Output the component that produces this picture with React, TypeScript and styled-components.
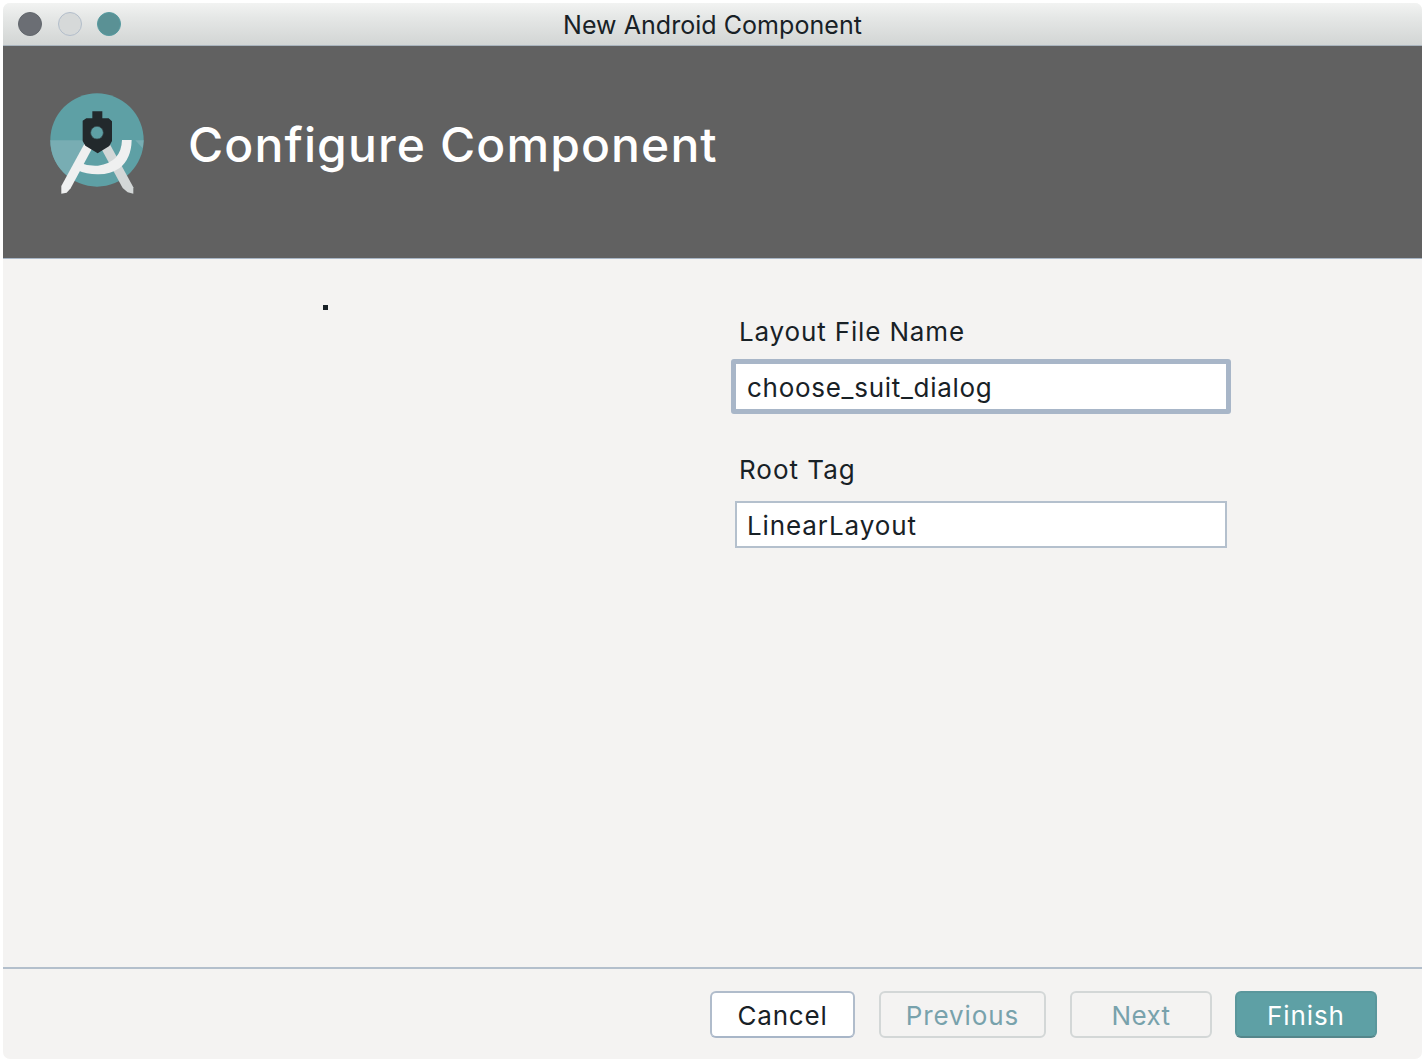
import React from "react";
import styled, { createGlobalStyle } from "styled-components";

const GlobalStyle = createGlobalStyle`
  * { box-sizing: border-box; }
  body { margin: 0; background: #ffffff; }
`;

const Page = styled.div`
  width: 1425px;
  height: 1062px;
  padding: 3px 3px 2px;
  font-family: Inter, "Liberation Sans", sans-serif;
  color: #182126;
`;

const Window = styled.main`
  width: 1419px;
  height: 1056px;
  display: flex;
  flex-direction: column;
  background: #f4f3f2;
  border-radius: 7px;
  overflow: hidden;
`;

const TitleBar = styled.header`
  height: 43px;
  flex: none;
  display: grid;
  grid-template-columns: 1fr auto 1fr;
  align-items: center;
  border-bottom: 1px solid #a9b4be;
  background: linear-gradient(#f2f3f2, #e5e7e6 35%, #d2d5d4);
`;

const Lights = styled.div`
  display: flex;
  gap: 15.5px;
  padding-left: 15px;
`;

const Light = styled.span<{ $fill: string; $edge: string }>`
  width: 24px;
  height: 24px;
  border-radius: 50%;
  background: ${(p) => p.$fill};
  border: 1px solid ${(p) => p.$edge};
`;

const WindowTitle = styled.div`
  font-size: 25px;
  line-height: 30px;
  padding-top: 1px;
  letter-spacing: 0.05px;
`;

const Banner = styled.section`
  height: 213px;
  flex: none;
  display: flex;
  align-items: flex-start;
  padding: 34px 0 0 37px;
  background: #616161;
  border-bottom: 1px solid #a8b6c6;
`;

const Heading = styled.h1`
  margin: 35px 0 0 28px;
  font-size: 48px;
  line-height: 60px;
  font-weight: 500;
  letter-spacing: 1.12px;
  color: #ffffff;
`;

const Content = styled.section`
  flex: 1;
  display: grid;
  grid-template-columns: 728px 500px;
`;

const Preview = styled.div`
  padding: 46px 0 0 320px;
`;

const Dot = styled.div`
  width: 5px;
  height: 5px;
  background: #182126;
`;

const Form = styled.div`
  display: flex;
  flex-direction: column;
  padding-top: 56px;
`;

const Label = styled.label<{ $spacing: number }>`
  height: 34px;
  padding-left: 8px;
  font-size: 26px;
  line-height: 34px;
  letter-spacing: ${(p) => p.$spacing}px;
`;

const Field = styled.input<{ $focused?: boolean; $spacing: number }>`
  width: ${(p) => (p.$focused ? 500 : 492)}px;
  height: ${(p) => (p.$focused ? 55 : 47)}px;
  margin: ${(p) => (p.$focused ? "10px 0 39px" : "14px 0 0 4px")};
  padding: 1px 0 0 ${(p) => (p.$focused ? 11 : 10)}px;
  border: ${(p) => (p.$focused ? "5px" : "2px")} solid ${(p) => (p.$focused ? "#a8b6c8" : "#b4c0cd")};
  border-radius: ${(p) => (p.$focused ? 3 : 0)}px;
  background: #ffffff;
  color: #182126;
  font: 400 26px Inter, "Liberation Sans", sans-serif;
  letter-spacing: ${(p) => p.$spacing}px;
  outline: none;
`;

const Footer = styled.footer`
  height: 92px;
  flex: none;
  display: flex;
  justify-content: flex-end;
  gap: 24px;
  padding: 22px 45px 0 0;
  border-top: 2px solid #b3bfcc;
`;

type Kind = "plain" | "disabled" | "primary";
const tones: Record<Kind, { bg: string; fg: string; edge: string; bottom: string }> = {
  plain: { bg: "#ffffff", fg: "#182126", edge: "#b0bccb", bottom: "#a8b6c8" },
  disabled: { bg: "#f4f3f2", fg: "#78a2ac", edge: "#d3d7d7", bottom: "#d3d7d7" },
  primary: { bg: "#5ea0a5", fg: "#ffffff", edge: "#5a979c", bottom: "#54868b" },
};

const Button = styled.button<{ $kind: Kind; $width: number; $spacing: number }>`
  width: ${(p) => p.$width}px;
  height: 47px;
  margin-left: ${(p) => (p.$kind === "primary" ? -1 : 0)}px;
  padding: 1px 0 0;
  border: 2px solid ${(p) => tones[p.$kind].edge};
  border-bottom-color: ${(p) => tones[p.$kind].bottom};
  border-radius: 6px;
  background: ${(p) => tones[p.$kind].bg};
  color: ${(p) => tones[p.$kind].fg};
  font: 400 26px Inter, "Liberation Sans", sans-serif;
  letter-spacing: ${(p) => p.$spacing}px;
`;

function StudioLogo() {
  return (
    <svg width="120" height="125" viewBox="0 0 360 375" aria-hidden="true">
      <circle cx="171" cy="180" r="140" fill="#5ea0a5" />
      <path d="M31 181H140L83 289C50 263 31 226 31 181Z" fill="#78adb3" />
      <path d="M286 181H311L308 205Z" fill="#78adb3" />
      <path d="M184 206L208 190L280 322L280 341L263 337L248 324Z" fill="#d3d7d7" />
      <path d="M134 190L155 208L92 325L80 338L64 341V318Z" fill="#eff0f0" />
      <path d="M119 248Q145 259 174 257Q244 247 246 180H275Q274 236 239 264Q210 284 172 283Q140 283 111 270Z" fill="#eff0f0" />
      <path d="M157 94H187V115H206L216 124V183L208 198L173 220L136 197L128 183V122L139 115H157Z" fill="#22292c" />
      <circle cx="171" cy="158" r="19" fill="#5ea0a5" stroke="#36474b" strokeWidth="2" />
    </svg>
  );
}

export default function App() {
  return (
    <>
      <GlobalStyle />
      <Page>
        <Window>
          <TitleBar>
            <Lights>
              <Light $fill="#6b6e74" $edge="#62676d" />
              <Light $fill="#d6d9d9" $edge="#b3becb" />
              <Light $fill="#5a9195" $edge="#569ba0" />
            </Lights>
            <WindowTitle>New Android Component</WindowTitle>
          </TitleBar>
          <Banner>
            <StudioLogo />
            <Heading>Configure Component</Heading>
          </Banner>
          <Content>
            <Preview>
              <Dot />
            </Preview>
            <Form>
              <Label htmlFor="layout" $spacing={0.85}>Layout File Name</Label>
              <Field id="layout" $focused $spacing={0.72} defaultValue="choose_suit_dialog" spellCheck={false} />
              <Label htmlFor="root" $spacing={1}>Root Tag</Label>
              <Field id="root" $spacing={0.9} defaultValue="LinearLayout" spellCheck={false} />
            </Form>
          </Content>
          <Footer>
            <Button $kind="plain" $width={145} $spacing={0.8}>Cancel</Button>
            <Button $kind="disabled" $width={167} $spacing={0.9}>Previous</Button>
            <Button $kind="disabled" $width={142} $spacing={0.4}>Next</Button>
            <Button $kind="primary" $width={142} $spacing={0.9}>Finish</Button>
          </Footer>
        </Window>
      </Page>
    </>
  );
}
